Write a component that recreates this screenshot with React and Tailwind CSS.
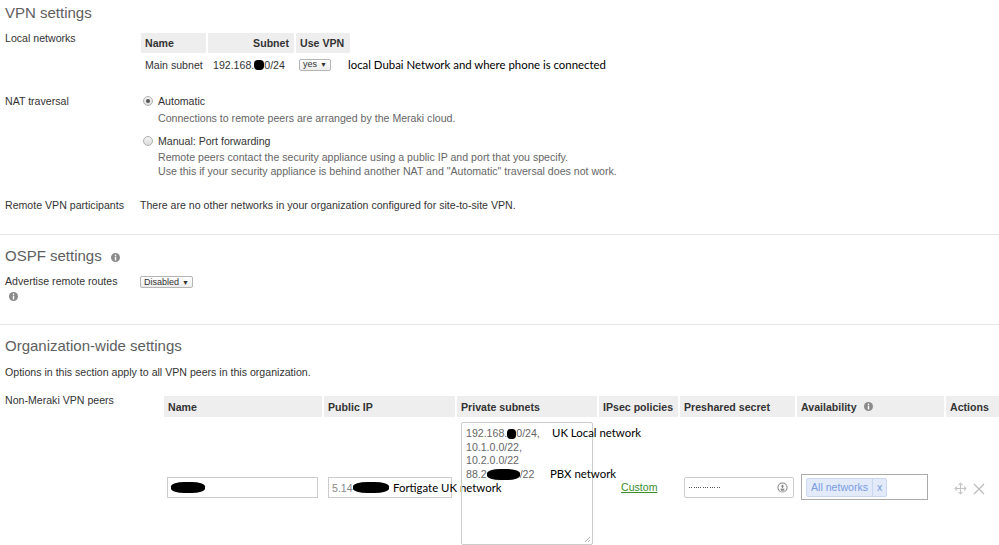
import React from "react";

const sans = { fontFamily: '"Liberation Sans", Arial, sans-serif' };
const note = { fontFamily: 'Lato, "Open Sans", sans-serif' };

function InfoIcon({ className = "" }) {
  return (
    <svg className={className} width="9" height="9" viewBox="0 0 10 10">
      <circle cx="5" cy="5" r="5" fill="#8a8a8a" />
      <circle cx="5" cy="2.6" r="0.9" fill="#fff" />
      <rect x="4.2" y="4.1" width="1.6" height="4.2" fill="#fff" />
    </svg>
  );
}

function Blot({ w, h = 11, className = "" }) {
  return (
    <span
      className={`inline-block bg-black rounded-[40%] align-middle ${className}`}
      style={{ width: w, height: h }}
    />
  );
}

function Select({ label, className = "" }) {
  return (
    <div
      className={`flex items-center justify-between h-[12px] border border-[#b5b5b5] rounded-[2px] bg-gradient-to-b from-white to-[#ececec] px-[3px] text-[9px] leading-none text-[#333] ${className}`}
    >
      <span>{label}</span>
      <span className="text-[7px]">▼</span>
    </div>
  );
}

function Radio({ checked }) {
  return (
    <div className="w-[10px] h-[10px] rounded-full border border-[#b0b0b0] bg-gradient-to-b from-[#f4f4f4] to-[#dcdcdc] flex items-center justify-center">
      {checked && <div className="w-[4px] h-[4px] rounded-full bg-[#555]" />}
    </div>
  );
}

function Heading({ children, className = "" }) {
  return (
    <div className={`pl-[5px] text-[15px] leading-[20px] text-[#5e5e5e] ${className}`}>
      {children}
    </div>
  );
}

export default function App() {
  return (
    <div
      className="relative w-[999px] h-[545px] overflow-hidden bg-white text-[10.6px] leading-[14px] text-[#333]"
      style={sans}
    >
      <Heading className="mt-[3px]">VPN settings</Heading>

      {/* Local networks */}
      <div className="flex mt-[8px]">
        <div className="w-[141px] shrink-0 pl-[5px]">Local networks</div>
        <div className="mt-[2px]">
          <div className="flex gap-[2px] h-[20px] font-bold">
            <div className="w-[65px] bg-[#eee] flex items-center pl-[4px]">Name</div>
            <div className="w-[86px] bg-[#eee] flex items-center justify-end pr-[5px]">Subnet</div>
            <div className="w-[54px] bg-[#eee] flex items-center pl-[4px]">Use VPN</div>
          </div>
          <div className="flex h-[23px] items-center">
            <div className="w-[67px] pl-[4px]">Main subnet</div>
            <div className="w-[88px] pl-[5px] flex items-center">
              192.168.<Blot w={10} h={10} />0/24
            </div>
            <Select label="yes" className="ml-[3px] w-[32px]" />
            <div className="ml-[17px] text-[11.4px] text-black whitespace-nowrap" style={note}>
              local Dubai Network and where phone is connected
            </div>
          </div>
        </div>
      </div>

      {/* NAT traversal */}
      <div className="flex mt-[18px]">
        <div className="w-[143px] shrink-0 pl-[5px]">NAT traversal</div>
        <div>
          <div className="flex items-center gap-[5px]">
            <Radio checked />
            <span>Automatic</span>
          </div>
          <div className="ml-[15px] mt-[3px] text-[#666]">
            Connections to remote peers are arranged by the Meraki cloud.
          </div>
          <div className="flex items-center gap-[5px] mt-[9px]">
            <Radio />
            <span>Manual: Port forwarding</span>
          </div>
          <div className="ml-[15px] mt-[2px] text-[#666]">
            <div>Remote peers contact the security appliance using a public IP and port that you specify.</div>
            <div>Use this if your security appliance is behind another NAT and "Automatic" traversal does not work.</div>
          </div>
        </div>
      </div>

      <div className="flex mt-[20px]">
        <div className="w-[140px] shrink-0 pl-[5px]">Remote VPN participants</div>
        <div>There are no other networks in your organization configured for site-to-site VPN.</div>
      </div>

      <div className="mt-[22px] border-t border-[#e6e6e6]" />

      <Heading className="mt-[11px] flex items-center gap-[9px]">
        <span>OSPF settings</span>
        <InfoIcon className="mt-[2px]" />
      </Heading>

      <div className="flex mt-[8px]">
        <div className="w-[140px] shrink-0 pl-[5px]">
          <div>Advertise remote routes</div>
          <InfoIcon className="mt-[4px] ml-[4px]" />
        </div>
        <Select label="Disabled" className="mt-[2px] w-[53px]" />
      </div>

      <div className="mt-[23px] border-t border-[#e6e6e6]" />

      <Heading className="mt-[11px]">Organization-wide settings</Heading>
      <div className="pl-[5px] mt-[9px]">
        Options in this section apply to all VPN peers in this organization.
      </div>

      {/* Non-Meraki VPN peers */}
      <div className="flex mt-[14px]">
        <div className="w-[164px] shrink-0 pl-[5px]">Non-Meraki VPN peers</div>
        <div className="mt-[3px] shrink-0">
          <div className="flex gap-[2px] h-[21px] font-bold">
            <div className="w-[158px] bg-[#eee] flex items-center pl-[4px]">Name</div>
            <div className="w-[131px] bg-[#eee] flex items-center pl-[4px]">Public IP</div>
            <div className="w-[140px] bg-[#eee] flex items-center pl-[4px]">Private subnets</div>
            <div className="w-[79px] bg-[#eee] flex items-center pl-[4px]">IPsec policies</div>
            <div className="w-[115px] bg-[#eee] flex items-center pl-[4px]">Preshared secret</div>
            <div className="w-[147px] bg-[#eee] flex items-center pl-[4px] gap-[7px]">
              <span>Availability</span>
              <InfoIcon />
            </div>
            <div className="w-[60px] bg-[#eee] flex items-center pl-[4px]">Actions</div>
          </div>

          <div className="flex gap-[2px] mt-[1px]">
            <div className="w-[158px]">
              <div className="mt-[59px] ml-[3px] w-[151px] h-[21px] border border-[#ccc] flex items-center pl-[3px]">
                <Blot w={34} h={11} />
              </div>
            </div>
            <div className="w-[131px] relative">
              <div className="mt-[59px] ml-[4px] w-[124px] h-[21px] border border-[#ccc] flex items-center pl-[3px] text-[#888]">
                5.14<Blot w={36} h={11} />
              </div>
              <div
                className="absolute left-[69px] top-[62px] text-[11.4px] leading-[16px] text-black whitespace-nowrap"
                style={note}
              >
                Fortigate UK network
              </div>
            </div>
            <div className="w-[140px] relative">
              <div className="mt-[4px] ml-[4px] w-[132px] h-[123px] border border-[#ccc] rounded-[2px] pt-[4px] pl-[4px] text-[#666] leading-[13.7px] relative">
                <div className="flex items-center">192.168.<Blot w={9} h={10} />0/24,</div>
                <div>10.1.0.0/22,</div>
                <div>10.2.0.0/22</div>
                <div className="flex items-center">88.2<Blot w={33} h={11} />/22</div>
                <svg className="absolute right-[1px] bottom-[1px]" width="7" height="7" viewBox="0 0 7 7">
                  <path d="M6 1L1 6M6 4L4 6" stroke="#999" strokeWidth="0.8" />
                </svg>
              </div>
              <div className="absolute left-[95px] top-[7px] text-[11.4px] leading-[16px] text-black whitespace-nowrap" style={note}>
                UK Local network
              </div>
              <div className="absolute left-[93px] top-[48px] text-[11.4px] leading-[16px] text-black whitespace-nowrap" style={note}>
                PBX network
              </div>
            </div>
            <div className="w-[79px]">
              <div className="mt-[62px] pl-[22px] text-[#3b8e2e] underline">Custom</div>
            </div>
            <div className="w-[115px]">
              <div className="mt-[59px] ml-[4px] w-[110px] h-[21px] border border-[#ccc] rounded-[2px] flex items-center justify-between pl-[4px] pr-[5px]">
                <span className="flex gap-[1.3px]">
                  {Array.from({ length: 14 }).map((_, i) => (
                    <span key={i} className="w-[1px] h-[1px] bg-[#555]" />
                  ))}
                </span>
                <svg width="11" height="11" viewBox="0 0 12 12">
                  <circle cx="6" cy="6" r="5" fill="none" stroke="#888" strokeWidth="1.1" />
                  <path d="M6 2.8L4 5h1.3v1.5h1.4V5H8z" fill="#888" />
                  <rect x="4" y="7.2" width="4" height="2.3" fill="#888" />
                </svg>
              </div>
            </div>
            <div className="w-[147px]">
              <div className="mt-[56px] ml-[4px] w-[127px] h-[26px] border border-[#aaa] flex items-center pl-[4px]">
                <div className="flex items-center h-[19px] border border-[#c9d7f2] bg-[#e3ebfb] rounded-[2px] text-[#7a9be0]">
                  <span className="px-[4px]">All networks</span>
                  <span className="h-full border-l border-[#c9d7f2] px-[4px] flex items-center">x</span>
                </div>
              </div>
            </div>
            <div className="w-[60px]">
              <div className="mt-[64px] ml-[8px] flex items-center gap-[6px]">
                <svg width="13" height="13" viewBox="0 0 24 24" fill="none" stroke="#c4c4c4" strokeWidth="2" strokeLinecap="round" strokeLinejoin="round">
                  <path d="M12 2v20M2 12h20M9 5l3-3 3 3M9 19l3 3 3-3M5 9l-3 3 3 3M19 9l3 3-3 3" />
                </svg>
                <svg width="12" height="12" viewBox="0 0 12 12" stroke="#bdbdbd" strokeWidth="1.3">
                  <path d="M1 1l10 10M11 1L1 11" />
                </svg>
              </div>
            </div>
          </div>
        </div>
      </div>
    </div>
  );
}
